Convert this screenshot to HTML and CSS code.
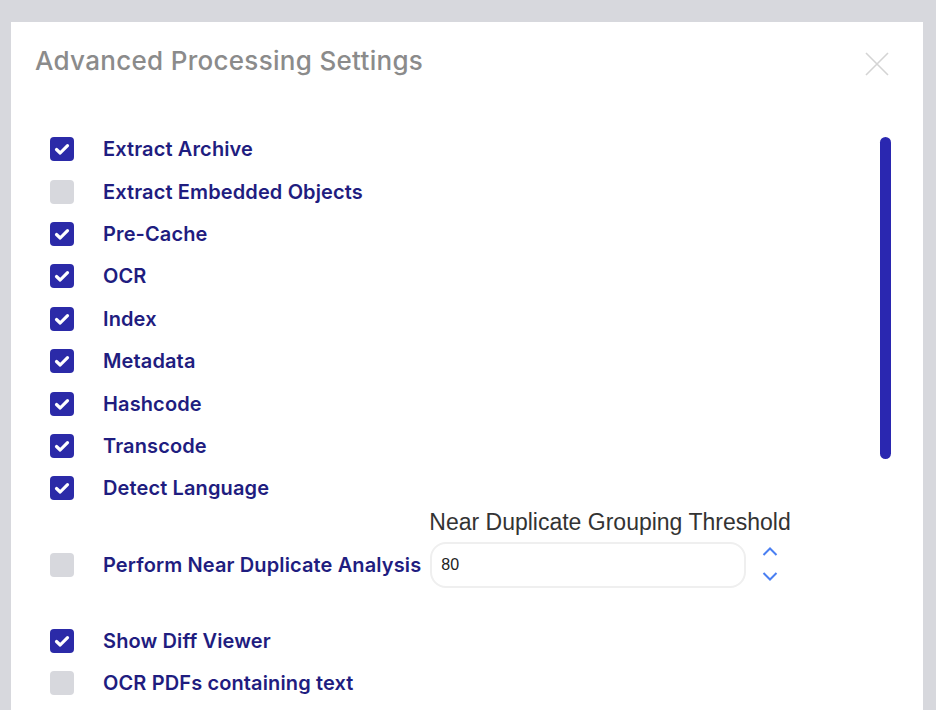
FILE: index.html
```html
<!DOCTYPE html>
<html lang="en">
<head>
    <meta charset="UTF-8">
    <meta name="viewport" content="width=device-width, initial-scale=1.0">
    <title>Advanced Processing Settings</title>
    <link rel="stylesheet" href="styles.css">
</head>
<body>

<div class="dialog">
    <div class="dialog-header">
        <h2 class="dialog-title">Advanced Processing Settings</h2>
        <button class="close-btn" aria-label="Close">
            <svg width="24" height="24" viewBox="0 0 24 24">
                <path d="M1 1 L23 23 M23 1 L1 23" stroke="#d4d4d4" stroke-width="1.6" fill="none"/>
            </svg>
        </button>
    </div>

    <div class="dialog-body">
        <div class="scroll-thumb"></div>

        <ul class="option-list">
            <li class="option"><span class="box checked"></span><span class="option-label">Extract Archive</span></li>
            <li class="option"><span class="box"></span><span class="option-label">Extract Embedded Objects</span></li>
            <li class="option"><span class="box checked"></span><span class="option-label">Pre-Cache</span></li>
            <li class="option"><span class="box checked"></span><span class="option-label">OCR</span></li>
            <li class="option"><span class="box checked"></span><span class="option-label">Index</span></li>
            <li class="option"><span class="box checked"></span><span class="option-label">Metadata</span></li>
            <li class="option"><span class="box checked"></span><span class="option-label">Hashcode</span></li>
            <li class="option"><span class="box checked"></span><span class="option-label">Transcode</span></li>
            <li class="option"><span class="box checked"></span><span class="option-label">Detect Language</span></li>

            <li class="option-near">
                <div class="option near-check"><span class="box"></span><span class="option-label">Perform Near Duplicate Analysis</span></div>
                <div class="threshold">
                    <label class="threshold-label" for="threshold">Near Duplicate Grouping Threshold</label>
                    <div class="threshold-row">
                        <input class="threshold-input" id="threshold" type="text" value="80">
                        <div class="spinner">
                            <svg width="16" height="10" viewBox="0 0 16 10"><path d="M1.5 8 L8 1.5 L14.5 8" stroke="#4a7ff2" stroke-width="2" fill="none"/></svg>
                            <svg width="16" height="10" viewBox="0 0 16 10"><path d="M1.5 2 L8 8.5 L14.5 2" stroke="#4a7ff2" stroke-width="2" fill="none"/></svg>
                        </div>
                    </div>
                </div>
            </li>

            <li class="option"><span class="box checked"></span><span class="option-label">Show Diff Viewer</span></li>
            <li class="option"><span class="box"></span><span class="option-label">OCR PDFs containing text</span></li>
        </ul>
    </div>
</div>

</body>
</html>
```

FILE: styles.css
```css
body {
    font-family: Inter, "Noto Sans", sans-serif;
    background-color: #d7d8dd;
    margin: 0;
    overflow: hidden;
}
.dialog {
    background: white;
    width: 912px;
    height: 720px;
    margin: 22px 0 0 11px;
}
.dialog-header {
    display: flex;
    justify-content: space-between;
    align-items: center;
    padding: 24px 34px 0 24px;
}
.dialog-title {
    margin: 0;
    font-size: 26px;
    line-height: 30px;
    font-weight: 500;
    letter-spacing: 0.3px;
    color: #8b8b8b;
}
.close-btn {
    background: none;
    border: none;
    padding: 0;
    width: 24px;
    height: 24px;
    margin-top: 6px;
    cursor: pointer;
}
.dialog-body {
    position: relative;
    padding: 52px 0 0 39px;
}
.scroll-thumb {
    position: absolute;
    top: 61px;
    right: 32px;
    width: 11px;
    height: 322px;
    border-radius: 6px;
    background-color: #2a27b0;
}
.option-list {
    list-style: none;
    margin: 0;
    padding: 0;
}
.option {
    display: flex;
    align-items: center;
    height: 42.4px;
}
.box {
    width: 24px;
    height: 24px;
    border-radius: 4px;
    background-color: #d7d8dd;
    flex-shrink: 0;
}
.box.checked {
    background-color: #2b2aa8;
    background-image: url("data:image/svg+xml,%3Csvg xmlns='http://www.w3.org/2000/svg' width='24' height='24'%3E%3Cpath d='M6.5 12.5 L10.2 16 L17.5 8.6' stroke='white' stroke-width='3.2' fill='none' stroke-linecap='round' stroke-linejoin='round'/%3E%3C/svg%3E");
}
.option-label {
    margin-left: 29px;
    font-size: 20px;
    font-weight: 600;
    color: #1f1d80;
    letter-spacing: 0.12px;
}
.option-near {
    display: flex;
    align-items: flex-end;
    padding: 0 0 32px;
}
.near-check {
    height: 46px;
}
.threshold {
    display: flex;
    flex-direction: column;
    margin-left: 9px;
}
.threshold-label {
    font-family: "Liberation Sans", Arial, sans-serif;
    font-size: 23px;
    line-height: 24px;
    color: #333;
    margin: 0 0 8px -1px;
}
.threshold-row {
    display: flex;
    align-items: center;
}
.threshold-input {
    width: 316px;
    height: 46px;
    box-sizing: border-box;
    border: 2px solid #efefef;
    border-radius: 16px;
    padding: 0 9px;
    font-family: "Liberation Sans", Arial, sans-serif;
    font-size: 16px;
    color: #222;
    outline: none;
}
.spinner {
    display: flex;
    flex-direction: column;
    gap: 14px;
    margin: -1px 0 0 16px;
}
```
